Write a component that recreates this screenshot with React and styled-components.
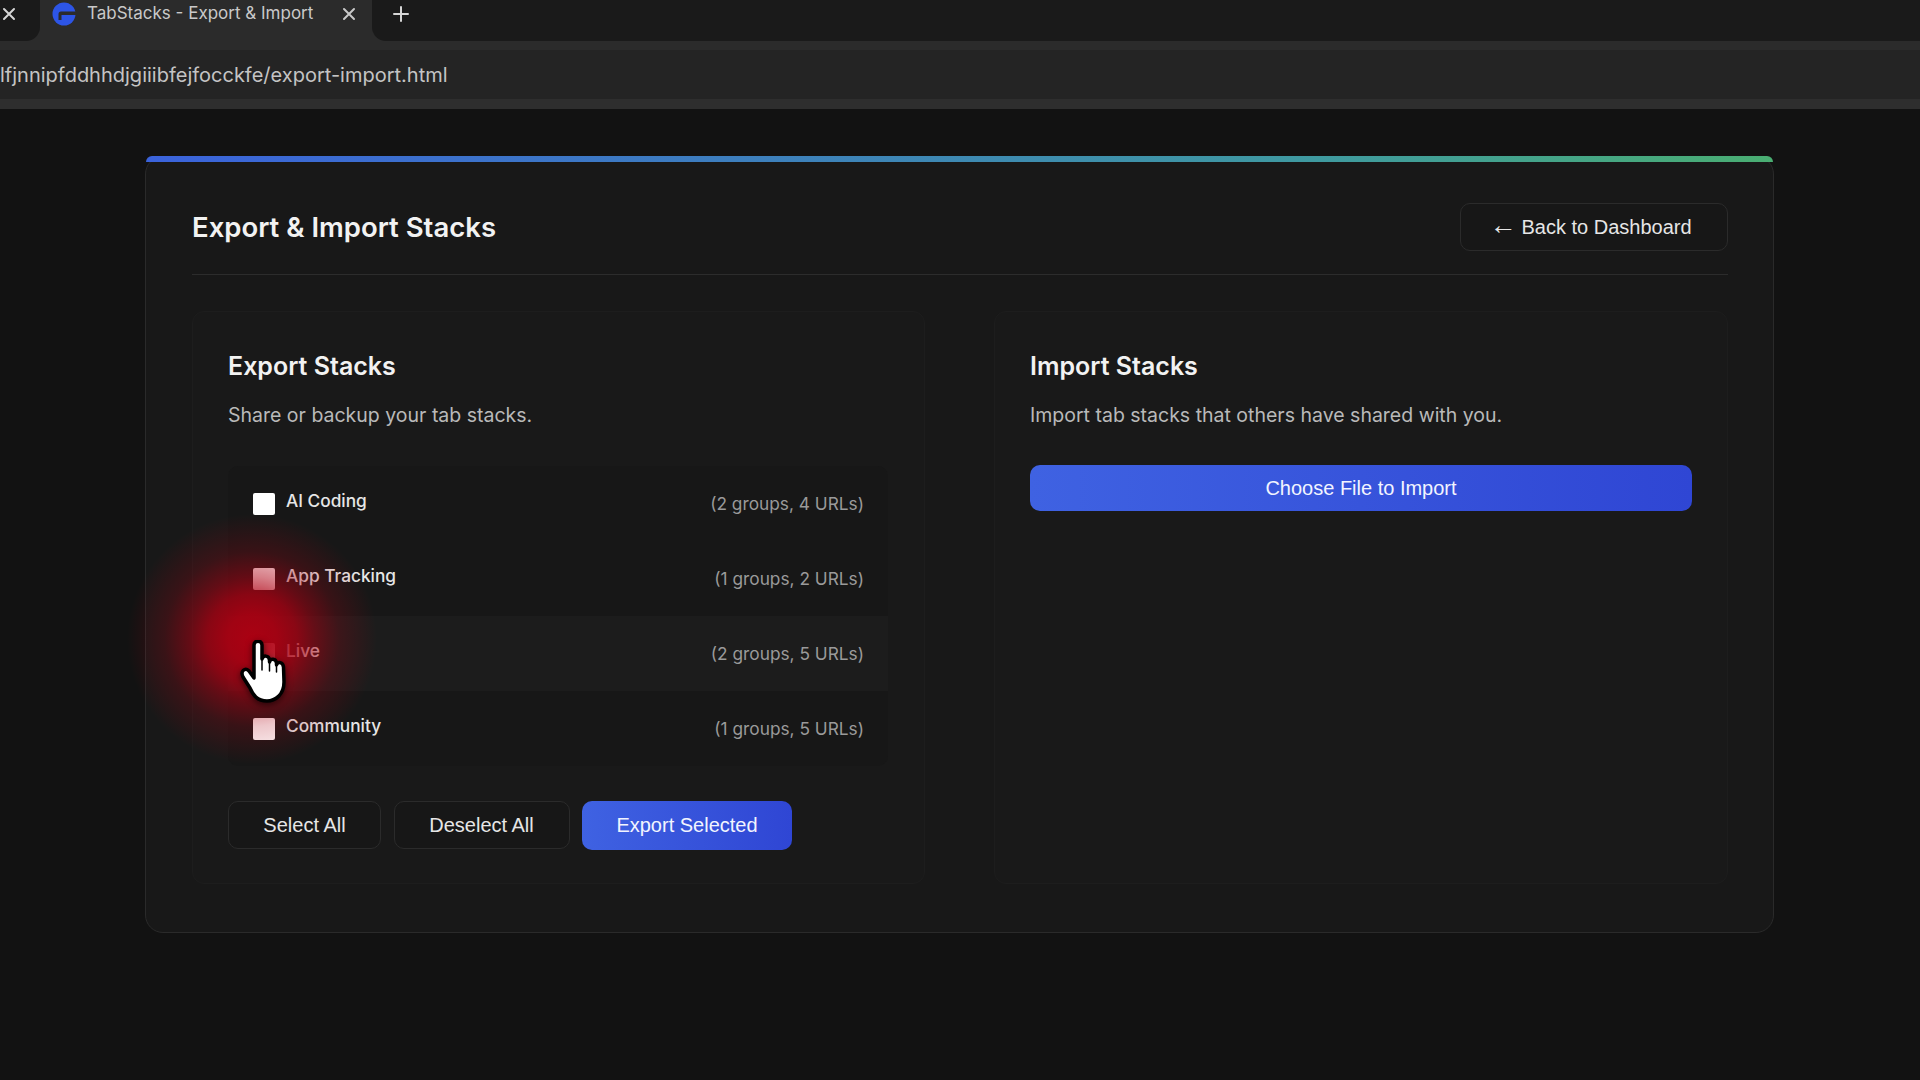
import React from "react";
import styled, { createGlobalStyle } from "styled-components";

const Global = createGlobalStyle`
  html, body { margin: 0; padding: 0; background: #121212; height: 100%; overflow: hidden; }
  * { box-sizing: border-box; }
  body { font-family: "Liberation Sans", Arial, sans-serif; color: #e8e8e8; }
`;

const Page = styled.div`
  width: 1920px;
  height: 1080px;
  display: flex;
  flex-direction: column;
  background: #121212;
`;

const TabStrip = styled.div`
  height: 50px;
  display: flex;
  background: #2b2b2b;
`;

const DarkZone = styled.div`
  height: 41px;
  background: #1a1a1a;
  flex: ${(p) => (p.$grow ? "1" : "0 0 40px")};
  border-radius: ${(p) => (p.$grow ? "0 0 0 14px" : "0 0 14px 0")};
  display: flex;
  align-items: center;
  color: #d6d6d6;
  padding-bottom: 14px;
`;

const Tab = styled.div`
  flex: 0 0 332px;
  display: flex;
  align-items: flex-start;
  padding: 2px 0 0 12px;
  color: #c9c9c9;
`;

const TabTitle = styled.span`
  font-family: Inter, sans-serif;
  font-size: 17px;
  line-height: 22px;
  margin-left: 11px;
  width: 255px;
  white-space: nowrap;
`;

const IconSlot = styled.span`
  display: inline-flex;
  margin-left: ${(p) => p.$left || 0}px;
  margin-top: ${(p) => p.$top || 0}px;
`;

const AddressBar = styled.div`
  height: 49px;
  background: #242424;
  display: flex;
  align-items: center;
  font-family: Inter, sans-serif;
  font-size: 20px;
  color: #c4c4c4;
  white-space: nowrap;
`;

const ToolbarEdge = styled.div`
  height: 10px;
  background: #2e2e2e;
`;

const Main = styled.main`
  flex: 1;
  padding: 47px 146px 0 145px;
`;

const Card = styled.section`
  position: relative;
  width: 1629px;
  height: 777px;
  background: #181818;
  border: 1px solid #2a2a2a;
  border-radius: 18px;
  padding: 46px 45px 0 46px;
`;

const TopGradient = styled.div`
  position: absolute;
  top: -1px;
  left: 0;
  right: 0;
  height: 6px;
  border-radius: 6px 6px 0 0;
  background: linear-gradient(90deg, #3b63dc 0%, #3f9aa0 72%, #4aae72 100%);
`;

const Header = styled.header`
  display: flex;
  align-items: center;
  justify-content: space-between;
  height: 72px;
  padding-bottom: 23px;
  border-bottom: 1px solid #2c2c2c;
`;

const Title = styled.h1`
  margin: 0;
  font-family: Inter, sans-serif;
  font-size: 27.5px;
  font-weight: 600;
  color: #f2f2f2;
`;

const OutlineButton = styled.button`
  height: 48px;
  width: ${(p) => p.$w}px;
  background: #171717;
  border: 1px solid #2b2b2b;
  border-radius: 10px;
  color: #e6e6e6;
  font-family: "Liberation Sans", Arial, sans-serif;
  font-size: 20px;
  padding: 0 ${(p) => p.$pr || 0}px 0 0;
`;

const ArrowGlyph = styled.span`
  font-size: 27px;
  line-height: 0;
  margin-right: 5px;
`;

const Columns = styled.div`
  display: grid;
  grid-template-columns: 733px 734px;
  gap: 69px;
  margin-top: 36px;
`;

const Panel = styled.div`
  height: 573px;
  background: #191919;
  border: 1px solid #1d1d1d;
  border-radius: 12px;
  padding: 39px 35px 0;
`;

const Heading = styled.h2`
  margin: 0;
  font-family: Inter, sans-serif;
  font-size: 25px;
  font-weight: 600;
  line-height: 30px;
  color: #f2f2f2;
`;

const Lead = styled.p`
  margin: 22px 0 38px;
  font-family: Inter, sans-serif;
  font-size: 19.5px;
  line-height: 24px;
  color: #b9b9b9;
`;

const List = styled.div`
  position: relative;
  width: 660px;
  margin-top: 39px;
  background: #171717;
  border-radius: 10px;
`;

const Row = styled.div`
  height: 75px;
  display: flex;
  align-items: center;
  padding: 0 24px 0 25px;
  background: ${(p) => (p.$hover ? "#1c1c1c" : "transparent")};
`;

const Check = styled.span`
  width: 22px;
  height: 22px;
  background: #fff;
  border-radius: 2px;
  flex: none;
`;

const RowLabel = styled.span`
  margin-left: 11px;
  padding-bottom: 7px;
  font-family: Inter, sans-serif;
  font-size: 17.3px;
  font-weight: 500;
  color: #e6e6e6;
`;

const RowCount = styled.span`
  margin-left: auto;
  font-family: Inter, sans-serif;
  font-size: 17.3px;
  color: #9a9a9a;
`;

const Glow = styled.div`
  position: absolute;
  left: -101px;
  top: 48px;
  width: 250px;
  height: 250px;
  pointer-events: none;
  background: radial-gradient(
    circle closest-side,
    rgba(175, 0, 18, 0.97) 0%,
    rgba(175, 0, 18, 0.9) 20%,
    rgba(175, 0, 18, 0.75) 36%,
    rgba(175, 0, 18, 0.5) 50%,
    rgba(175, 0, 18, 0.22) 70%,
    rgba(175, 0, 18, 0) 100%
  );
`;

const Pointer = styled.svg`
  position: absolute;
  left: 12px;
  top: 174px;
  width: 46px;
  height: 64px;
  filter: drop-shadow(0 2px 3px rgba(0, 0, 0, 0.6));
`;

const Actions = styled.div`
  display: flex;
  gap: 12.5px;
  margin-top: 35px;
`;

const PrimaryButton = styled.button`
  height: ${(p) => p.$h || 49}px;
  width: ${(p) => (p.$w ? p.$w + "px" : "100%")};
  border: 0;
  border-radius: 10px;
  padding: 0;
  background: linear-gradient(90deg, #3f62e2, #2f46d4);
  color: #f2f4ff;
  font-family: "Liberation Sans", Arial, sans-serif;
  font-size: 20px;
`;

const XIcon = () => (
  <svg width="14" height="14" viewBox="0 0 14 14" stroke="currentColor" strokeWidth="2" strokeLinecap="round">
    <path d="M2 2 L12 12 M12 2 L2 12" />
  </svg>
);

const PlusIcon = () => (
  <svg width="16" height="16" viewBox="0 0 16 16" stroke="currentColor" strokeWidth="2" strokeLinecap="round">
    <path d="M8 1 V15 M1 8 H15" />
  </svg>
);

const Favicon = () => (
  <svg width="24" height="24" viewBox="0 0 24 24">
    <circle cx="12" cy="12" r="11.5" fill="#2d55e6" />
    <path d="M24 9.5 H9 Q6.5 9.5 6.5 12 V18 H9.5 V13 H24 Z" fill="#2b2b2b" />
  </svg>
);

const rows = [
  ["AI Coding", "(2 groups, 4 URLs)"],
  ["App Tracking", "(1 groups, 2 URLs)"],
  ["Live", "(2 groups, 5 URLs)"],
  ["Community", "(1 groups, 5 URLs)"],
];

export default function App() {
  return (
    <Page>
      <Global />
      <TabStrip>
        <DarkZone>
          <IconSlot $left={2}><XIcon /></IconSlot>
        </DarkZone>
        <Tab>
          <Favicon />
          <TabTitle>TabStacks - Export &amp; Import</TabTitle>
          <IconSlot $left={0} $top={5}><XIcon /></IconSlot>
        </Tab>
        <DarkZone $grow>
          <IconSlot $left={21}><PlusIcon /></IconSlot>
        </DarkZone>
      </TabStrip>
      <AddressBar>lfjnnipfddhhdjgiiibfejfocckfe/export-import.html</AddressBar>
      <ToolbarEdge />
      <Main>
        <Card>
          <TopGradient />
          <Header>
            <Title>Export &amp; Import Stacks</Title>
            <OutlineButton $w={268} $pr={7}><ArrowGlyph>←</ArrowGlyph>Back to Dashboard</OutlineButton>
          </Header>
          <Columns>
            <Panel>
              <Heading>Export Stacks</Heading>
              <Lead>Share or backup your tab stacks.</Lead>
              <List>
                {rows.map(([label, count], i) => (
                  <Row key={label} $hover={i === 2}>
                    <Check />
                    <RowLabel>{label}</RowLabel>
                    <RowCount>{count}</RowCount>
                  </Row>
                ))}
                <Glow />
                <Pointer viewBox="0 0 46 64">
                  <path
                    d="M14 5 C14 0 22 0 22 5 L22 19 C23 15 29 15 29.5 20 L29.5 22 C30.5 18 36 18.5 36.5 23 L36.5 25 C38 21 43 22 43.5 27 L44 42 C44 55 35 61 27 61 C17 61 13 55 10 48 L3 37 C0 31 5 27 9 31 L14 38 Z"
                    fill="#fff"
                    stroke="#000"
                    strokeWidth="3.5"
                    strokeLinejoin="round"
                  />
                  <path d="M22 19 V30 M29.5 22 V31 M36.5 25 V32" stroke="#000" strokeWidth="1.5" strokeLinecap="round" fill="none" />
                </Pointer>
              </List>
              <Actions>
                <OutlineButton $w={153}>Select All</OutlineButton>
                <OutlineButton $w={176}>Deselect All</OutlineButton>
                <PrimaryButton $w={210}>Export Selected</PrimaryButton>
              </Actions>
            </Panel>
            <Panel>
              <Heading>Import Stacks</Heading>
              <Lead>Import tab stacks that others have shared with you.</Lead>
              <PrimaryButton $h={46}>Choose File to Import</PrimaryButton>
            </Panel>
          </Columns>
        </Card>
      </Main>
    </Page>
  );
}
